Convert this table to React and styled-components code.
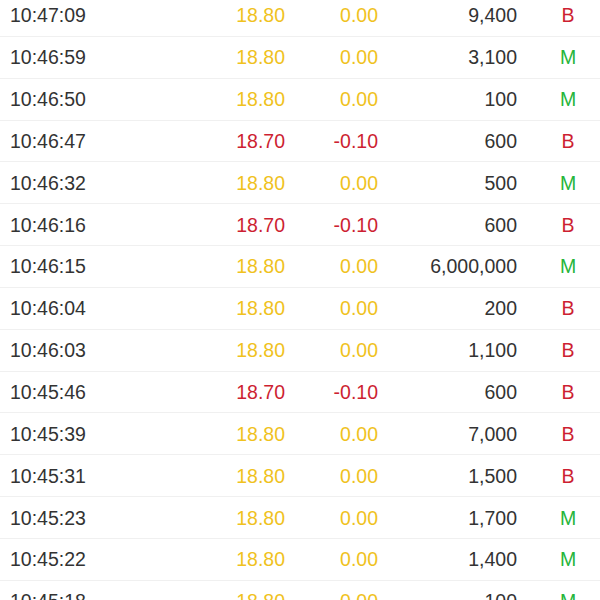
import React from "react";
import styled, { createGlobalStyle } from "styled-components";

const GlobalStyle = createGlobalStyle`
  html, body {
    margin: 0;
    padding: 0;
    background: #ffffff;
    overflow: hidden;
  }
`;

const colors = {
  up: "#f0c21e",
  down: "#cd1f32",
  buy: "#cd1f32",
  mid: "#25b53a",
  text: "#333333",
};

const trades = [
  ["10:47:09", "18.80", "0.00", "9,400", "B"],
  ["10:46:59", "18.80", "0.00", "3,100", "M"],
  ["10:46:50", "18.80", "0.00", "100", "M"],
  ["10:46:47", "18.70", "-0.10", "600", "B"],
  ["10:46:32", "18.80", "0.00", "500", "M"],
  ["10:46:16", "18.70", "-0.10", "600", "B"],
  ["10:46:15", "18.80", "0.00", "6,000,000", "M"],
  ["10:46:04", "18.80", "0.00", "200", "B"],
  ["10:46:03", "18.80", "0.00", "1,100", "B"],
  ["10:45:46", "18.70", "-0.10", "600", "B"],
  ["10:45:39", "18.80", "0.00", "7,000", "B"],
  ["10:45:31", "18.80", "0.00", "1,500", "B"],
  ["10:45:23", "18.80", "0.00", "1,700", "M"],
  ["10:45:22", "18.80", "0.00", "1,400", "M"],
  ["10:45:18", "18.80", "0.00", "100", "M"],
];

const Page = styled.div`
  width: 600px;
  height: 600px;
  overflow: hidden;
  background: #fff;
  font-family: "Liberation Sans", Arial, sans-serif;
`;

const List = styled.div`
  margin-top: -5px;
`;

const Row = styled.div`
  display: grid;
  grid-template-columns: 190px 85px 93px 139px 1fr;
  align-items: center;
  height: 41.85px;
  box-sizing: border-box;
  padding-left: 10px;
  padding-top: 1px;
  border-bottom: 1px solid #f0f0f0;
  font-size: 19.5px;
  color: ${colors.text};
`;

const Time = styled.span`
  color: ${colors.text};
`;

const Num = styled.span`
  text-align: right;
  color: ${(p) => p.$color || colors.text};
`;

const Side = styled.span`
  padding-left: 19px;
  text-align: center;
  color: ${(p) => (p.$side === "B" ? colors.buy : colors.mid)};
`;

export default function App() {
  return (
    <Page>
      <GlobalStyle />
      <List>
        {trades.map(([time, price, change, vol, side], i) => {
          const tone = change.startsWith("-") ? colors.down : colors.up;
          return (
            <Row key={i}>
              <Time>{time}</Time>
              <Num $color={tone}>{price}</Num>
              <Num $color={tone}>{change}</Num>
              <Num>{vol}</Num>
              <Side $side={side}>{side}</Side>
            </Row>
          );
        })}
      </List>
    </Page>
  );
}
